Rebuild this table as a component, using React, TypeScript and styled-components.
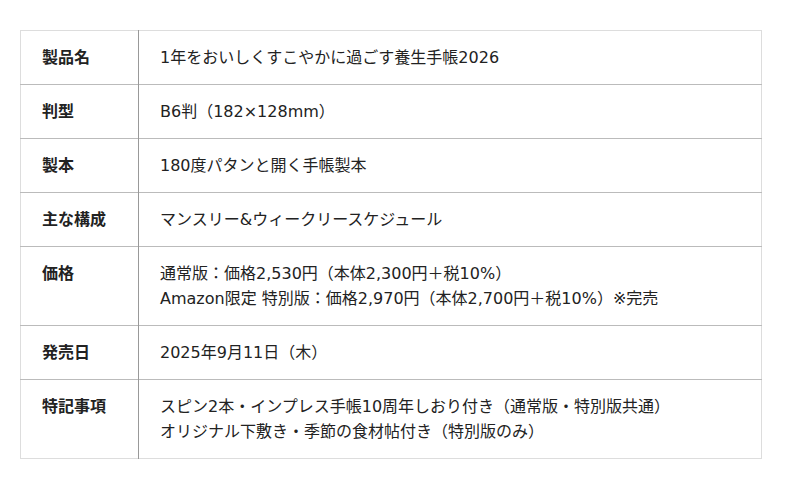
import React from "react";
import styled, { createGlobalStyle } from "styled-components";

const GlobalStyle = createGlobalStyle`
	body {
		margin: 0;
		background: #fff;
		font-family: "DejaVu Sans", "Noto Sans CJK JP", sans-serif;
		color: #222;
	}
`;

const Page = styled.div`
	padding: 30px 20px;
`;

const SpecTable = styled.table`
	width: 742px;
	border-collapse: collapse;
	border: 1px solid #ddd;
	font-size: 16px;
	line-height: 25px;
`;

const Row = styled.tr`
	border-top: 1px solid #bbb;
	&:first-child {
		border-top: 1px solid #ddd;
	}
	&:last-child {
		border-bottom: 1px solid #ddd;
	}
`;

const Head = styled.th`
	width: 118px;
	box-sizing: border-box;
	padding: 14px 21px;
	text-align: left;
	vertical-align: top;
	font-weight: 700;
	border-right: 1px solid #999;
`;

const Cell = styled.td`
	padding: 14px 21px;
	vertical-align: top;
	font-weight: 400;
`;

const Line = styled.div``;

interface Spec {
	label: string;
	lines: string[];
}

const specs: Spec[] = [
	{ label: "製品名", lines: ["1年をおいしくすこやかに過ごす養生手帳2026"] },
	{ label: "判型", lines: ["B6判（182×128mm）"] },
	{ label: "製本", lines: ["180度パタンと開く手帳製本"] },
	{ label: "主な構成", lines: ["マンスリー&ウィークリースケジュール"] },
	{
		label: "価格",
		lines: [
			"通常版：価格2,530円（本体2,300円＋税10%）",
			"Amazon限定 特別版：価格2,970円（本体2,700円＋税10%）※完売",
		],
	},
	{ label: "発売日", lines: ["2025年9月11日（木）"] },
	{
		label: "特記事項",
		lines: [
			"スピン2本・インプレス手帳10周年しおり付き（通常版・特別版共通）",
			"オリジナル下敷き・季節の食材帖付き（特別版のみ）",
		],
	},
];

export default function App() {
	return (
		<>
			<GlobalStyle />
			<Page>
				<SpecTable>
					<tbody>
						{specs.map((s) => (
							<Row key={s.label}>
								<Head>{s.label}</Head>
								<Cell>
									{s.lines.map((l) => (
										<Line key={l}>{l}</Line>
									))}
								</Cell>
							</Row>
						))}
					</tbody>
				</SpecTable>
			</Page>
		</>
	);
}
